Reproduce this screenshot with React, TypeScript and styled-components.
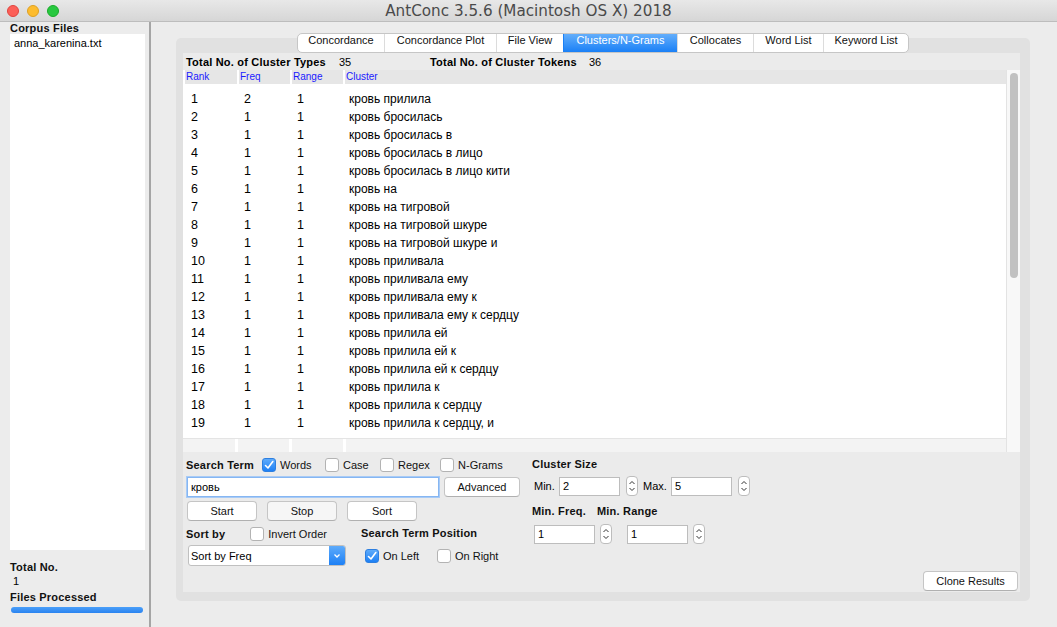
import React from "react";
import styled, { createGlobalStyle, css } from "styled-components";

const GlobalStyle = createGlobalStyle`
  html, body { margin: 0; padding: 0; }
  body {
    background: #ececec;
    font-family: "Liberation Sans", Arial, sans-serif;
    color: #000;
    overflow: hidden;
  }
  * { box-sizing: border-box; }
`;

const Window = styled.div`
  width: 1057px;
  height: 627px;
  display: flex;
  flex-direction: column;
  background: #ececec;
`;

const TitleBar = styled.div`
  height: 22px;
  flex: 0 0 22px;
  display: flex;
  align-items: center;
  position: relative;
  background: linear-gradient(#e8e8e8, #d6d6d6);
  border-bottom: 1px solid #bdbdbd;
`;

const Lights = styled.div`
  display: flex;
  gap: 8px;
  padding-left: 7px;
`;

const Light = styled.span<{ $c: string; $b: string }>`
  width: 12px;
  height: 12px;
  border-radius: 50%;
  background: ${(p) => p.$c};
  border: 1px solid ${(p) => p.$b};
`;

const Title = styled.div`
  position: absolute;
  left: 0;
  right: 0;
  text-align: center;
  font-size: 15.2px;
  color: #4a4a4a;
  font-family: "DejaVu Sans", sans-serif;
  pointer-events: none;
`;

const Body = styled.div`
  flex: 1;
  display: flex;
  min-height: 0;
`;

const Sidebar = styled.div`
  width: 149px;
  flex: 0 0 149px;
  display: flex;
  flex-direction: column;
  padding: 0 4px 0 10px;
`;

const BoldLabel = styled.div`
  font-weight: bold;
  font-size: 11px;
  letter-spacing: 0.2px;
  color: #111;
  white-space: nowrap;
`;

const FileList = styled.div`
  background: #fff;
  height: 516px;
  padding: 3px 4px;
  font-size: 11px;
`;

const SideStats = styled.div`
  display: flex;
  flex-direction: column;
  margin-top: 11px;
`;

const StatValue = styled.div`
  font-size: 11px;
  padding-left: 3px;
  margin: 2px 0 4px;
`;

const Progress = styled.div`
  margin-top: 4px;
  height: 6px;
  width: 132px;
  margin-left: 1px;
  border-radius: 3px;
  background: linear-gradient(#4b9ff9, #2a83f0);
`;

const Divider = styled.div`
  width: 2px;
  flex: 0 0 2px;
  background: #a5a5a5;
`;

const Main = styled.div`
  flex: 1;
  padding: 16px 27px 0 25px;
  display: flex;
  flex-direction: column;
`;

const TabPane = styled.div`
  position: relative;
  height: 563px;
  background: #e1e1e1;
  border-radius: 5px;
  padding: 15px 10px 9px 7px;
  display: flex;
  flex-direction: column;
`;

const Tabs = styled.div`
  position: absolute;
  top: -5px;
  left: 0;
  right: 0;
  display: flex;
  justify-content: center;
`;

const TabGroup = styled.div`
  display: flex;
  height: 20px;
  border: 1px solid #c6c6c6;
  border-radius: 5px;
  overflow: hidden;
  background: #fff;
`;

const Tab = styled.div<{ $active?: boolean; $w: number }>`
  width: ${(p) => p.$w}px;
  font-size: 11px;
  display: flex;
  align-items: flex-start;
  justify-content: center;
  color: #111;
  border-left: 1px solid #dcdcdc;
  &:first-child { border-left: none; }
  ${(p) =>
    p.$active &&
    css`
      background: linear-gradient(#63aefb, #1a80f6);
      color: #fff;
      border-left-color: #1a80f6;
    `}
`;

const Inner = styled.div`
  flex: 1;
  background: #ebebeb;
  display: flex;
  flex-direction: column;
`;

const StatsRow = styled.div`
  height: 17px;
  display: flex;
  align-items: center;
  padding-left: 3px;
  font-size: 11px;
`;

const StatLabel = styled.span<{ $w: number }>`
  font-weight: bold;
  letter-spacing: 0.2px;
  width: ${(p) => p.$w}px;
`;

const StatNum = styled.span<{ $w: number }>`
  width: ${(p) => p.$w}px;
`;

const TableWrap = styled.div`
  display: flex;
  height: 382px;
`;

const Table = styled.div`
  flex: 1;
  display: flex;
  flex-direction: column;
  background: #fff;
`;

const GridRow = styled.div`
  display: grid;
  grid-template-columns: 52px 51px 51px 1fr;
  column-gap: 2px;
  padding-left: 2px;
`;

const HeadRow = styled(GridRow)`
  background: #fff;
  height: 14px;
`;

const HeadCell = styled.div`
  background: #e6e6e6;
  color: #1a1aff;
  font-size: 10px;
  line-height: 14px;
  padding-left: 1px;
`;

const Rows = styled.div`
  flex: 1;
  padding-top: 6px;
`;

const DataRow = styled(GridRow)`
  height: 18px;
  align-items: center;
`;

const DataCell = styled.div<{ $pl: number; $text?: boolean }>`
  padding-left: ${(p) => p.$pl}px;
  white-space: nowrap;
  font-size: ${(p) => (p.$text ? 12 : 12.5)}px;
`;

const FootRow = styled(GridRow)`
  height: 14px;
  column-gap: 3px;
  padding-left: 0;
  border-top: 1px solid #e4e4e4;
`;

const FootCell = styled.div`
  background: #f3f3f3;
`;

const ScrollTrack = styled.div`
  width: 14px;
  flex: 0 0 14px;
  background: #f8f8f8;
  border-left: 1px solid #e3e3e3;
  padding: 3px 2px 0 3px;
`;

const Thumb = styled.div`
  height: 205px;
  border-radius: 4px;
  background: #c1c1c1;
`;

const Controls = styled.div`
  flex: 1;
  display: flex;
  padding: 6px 2px 1px 3px;
`;

const LeftCol = styled.div`
  width: 346px;
  display: flex;
  flex-direction: column;
`;

const Line = styled.div<{ $gap?: number; $mt?: number }>`
  display: flex;
  align-items: center;
  gap: ${(p) => p.$gap ?? 0}px;
  margin-top: ${(p) => p.$mt ?? 0}px;
`;

const CheckWrap = styled.label<{ $ml?: number; $w?: number }>`
  display: flex;
  align-items: center;
  gap: 4px;
  font-size: 11px;
  margin-left: ${(p) => p.$ml ?? 0}px;
  width: ${(p) => (p.$w ? `${p.$w}px` : "auto")};
  color: #111;
  white-space: nowrap;
`;

const Box = styled.span<{ $on?: boolean }>`
  width: 14px;
  height: 14px;
  flex: 0 0 14px;
  border-radius: 3px;
  display: inline-flex;
  align-items: center;
  justify-content: center;
  ${(p) =>
    p.$on
      ? css`
          background: linear-gradient(#5eabfb, #1d80f5);
          border: 1px solid #2d7fe0;
        `
      : css`
          background: #fff;
          border: 1px solid #b3b3b3;
        `}
`;

const TextInput = styled.div<{ $w: number; $focus?: boolean; $ml?: number }>`
  width: ${(p) => p.$w}px;
  height: ${(p) => (p.$focus ? 20 : 19)}px;
  margin-left: ${(p) => p.$ml ?? 0}px;
  background: #fff;
  border: 1px solid ${(p) => (p.$focus ? "#86b6f2" : "#bdbdbd")};
  box-shadow: ${(p) => (p.$focus ? "0 0 0 1px #a8cbf6" : "none")};
  font-size: 11px;
  display: flex;
  align-items: center;
  padding-left: 3px;
`;

const Button = styled.div<{ $w: number; $dim?: boolean; $ml?: number }>`
  width: ${(p) => p.$w}px;
  height: 20px;
  margin-left: ${(p) => p.$ml ?? 0}px;
  background: ${(p) => (p.$dim ? "#f6f6f6" : "#fff")};
  border: 1px solid #c5c5c5;
  border-bottom-color: #b0b0b0;
  border-radius: 4px;
  font-size: 11px;
  display: flex;
  align-items: center;
  justify-content: center;
  color: #111;
`;

const SortGroups = styled.div`
  display: flex;
  margin-top: 6px;
`;

const SortCol = styled.div<{ $w: number }>`
  width: ${(p) => p.$w}px;
  display: flex;
  flex-direction: column;
`;

const Select = styled.div`
  margin-top: 4px;
  margin-left: 2px;
  width: 158px;
  height: 21px;
  display: flex;
  background: #fff;
  border: 1px solid #c0c0c0;
  border-radius: 3px;
  font-size: 11px;
  overflow: hidden;
`;

const SelectText = styled.div`
  flex: 1;
  display: flex;
  align-items: center;
  padding-left: 2px;
`;

const SelectArrow = styled.div`
  width: 16px;
  background: linear-gradient(#5eabfb, #1d80f5);
  display: flex;
  align-items: center;
  justify-content: center;
`;

const RightCol = styled.div`
  width: 230px;
  display: flex;
  flex-direction: column;
`;

const SmallLabel = styled.span<{ $w: number; $ml?: number }>`
  font-size: 11px;
  display: inline-block;
  width: ${(p) => p.$w}px;
  margin-left: ${(p) => p.$ml ?? 0}px;
`;

const StepperBox = styled.div<{ $ml: number }>`
  width: 12px;
  height: 20px;
  margin-left: ${(p) => p.$ml}px;
  border: 1px solid #bdbdbd;
  border-radius: 4px;
  background: #fff;
  display: flex;
  align-items: center;
  justify-content: center;
`;

const Filler = styled.div`
  flex: 1;
  display: flex;
  justify-content: flex-end;
  align-items: flex-end;
`;

const Check = () => (
  <svg width="10" height="10" viewBox="0 0 10 10">
    <path d="M1.5 5.5 L4 8 L8.8 1.5" fill="none" stroke="#fff" strokeWidth="1.6" strokeLinecap="round" strokeLinejoin="round" />
  </svg>
);

const CheckBox = ({ label, on, ml, w }: { label: string; on?: boolean; ml?: number; w?: number }) => (
  <CheckWrap $ml={ml} $w={w}>
    <Box $on={on}>{on && <Check />}</Box>
    {label}
  </CheckWrap>
);

const Stepper = ({ ml }: { ml: number }) => (
  <StepperBox $ml={ml}>
    <svg width="8" height="14" viewBox="0 0 8 14">
      <path d="M1.5 5 L4 2.5 L6.5 5" fill="none" stroke="#333" strokeWidth="1" />
      <path d="M1.5 9 L4 11.5 L6.5 9" fill="none" stroke="#333" strokeWidth="1" />
    </svg>
  </StepperBox>
);

const rows: [number, number, number, string][] = [
  [1, 2, 1, "кровь прилила"],
  [2, 1, 1, "кровь бросилась"],
  [3, 1, 1, "кровь бросилась в"],
  [4, 1, 1, "кровь бросилась в лицо"],
  [5, 1, 1, "кровь бросилась в лицо кити"],
  [6, 1, 1, "кровь на"],
  [7, 1, 1, "кровь на тигровой"],
  [8, 1, 1, "кровь на тигровой шкуре"],
  [9, 1, 1, "кровь на тигровой шкуре и"],
  [10, 1, 1, "кровь приливала"],
  [11, 1, 1, "кровь приливала ему"],
  [12, 1, 1, "кровь приливала ему к"],
  [13, 1, 1, "кровь приливала ему к сердцу"],
  [14, 1, 1, "кровь прилила ей"],
  [15, 1, 1, "кровь прилила ей к"],
  [16, 1, 1, "кровь прилила ей к сердцу"],
  [17, 1, 1, "кровь прилила к"],
  [18, 1, 1, "кровь прилила к сердцу"],
  [19, 1, 1, "кровь прилила к сердцу, и"],
];

const tabs: [string, number][] = [
  ["Concordance", 86],
  ["Concordance Plot", 112],
  ["File View", 67],
  ["Clusters/N-Grams", 114],
  ["Collocates", 76],
  ["Word List", 70],
  ["Keyword List", 85],
];

export default function App() {
  return (
    <>
      <GlobalStyle />
      <Window>
        <TitleBar>
          <Lights>
            <Light $c="#fc5f57" $b="#e0443e" />
            <Light $c="#fdbc2e" $b="#dea123" />
            <Light $c="#28c840" $b="#1aab29" />
          </Lights>
          <Title>AntConc 3.5.6 (Macintosh OS X) 2018</Title>
        </TitleBar>
        <Body>
          <Sidebar>
            <BoldLabel>Corpus Files</BoldLabel>
            <FileList>anna_karenina.txt</FileList>
            <SideStats>
              <BoldLabel>Total No.</BoldLabel>
              <StatValue>1</StatValue>
              <BoldLabel>Files Processed</BoldLabel>
              <Progress />
            </SideStats>
          </Sidebar>
          <Divider />
          <Main>
            <TabPane>
              <Tabs>
                <TabGroup>
                  {tabs.map(([t, w]) => (
                    <Tab key={t} $w={w} $active={t === "Clusters/N-Grams"}>
                      {t}
                    </Tab>
                  ))}
                </TabGroup>
              </Tabs>
              <Inner>
                <StatsRow>
                  <StatLabel $w={153}>Total No. of Cluster Types</StatLabel>
                  <StatNum $w={91}>35</StatNum>
                  <StatLabel $w={159}>Total No. of Cluster Tokens</StatLabel>
                  <StatNum $w={30}>36</StatNum>
                </StatsRow>
                <TableWrap>
                  <Table>
                    <HeadRow>
                      <HeadCell>Rank</HeadCell>
                      <HeadCell>Freq</HeadCell>
                      <HeadCell>Range</HeadCell>
                      <HeadCell>Cluster</HeadCell>
                    </HeadRow>
                    <Rows>
                      {rows.map(([r, f, g, c]) => (
                        <DataRow key={r}>
                          <DataCell $pl={6}>{r}</DataCell>
                          <DataCell $pl={5}>{f}</DataCell>
                          <DataCell $pl={5}>{g}</DataCell>
                          <DataCell $pl={4} $text>{c}</DataCell>
                        </DataRow>
                      ))}
                    </Rows>
                    <FootRow>
                      <FootCell />
                      <FootCell />
                      <FootCell />
                      <FootCell />
                    </FootRow>
                  </Table>
                  <ScrollTrack>
                    <Thumb />
                  </ScrollTrack>
                </TableWrap>
                <Controls>
                  <LeftCol>
                    <Line>
                      <BoldLabel>Search Term</BoldLabel>
                      <CheckBox label="Words" on ml={8} w={63} />
                      <CheckBox label="Case" w={55} />
                      <CheckBox label="Regex" w={60} />
                      <CheckBox label="N-Grams" />
                    </Line>
                    <Line $gap={5} $mt={5}>
                      <TextInput $w={252} $focus $ml={1}>
                        кровь
                      </TextInput>
                      <Button $w={76}>Advanced</Button>
                    </Line>
                    <Line $gap={10} $mt={4}>
                      <Button $w={70} $ml={1}>Start</Button>
                      <Button $w={70} $dim>Stop</Button>
                      <Button $w={70}>Sort</Button>
                    </Line>
                    <SortGroups>
                      <SortCol $w={175}>
                        <Line>
                          <BoldLabel>Sort by</BoldLabel>
                          <CheckBox label="Invert Order" ml={25} />
                        </Line>
                        <Select>
                          <SelectText>Sort by Freq</SelectText>
                          <SelectArrow>
                            <svg width="8" height="6" viewBox="0 0 8 6">
                              <path d="M1.5 1.5 L4 4 L6.5 1.5" fill="none" stroke="#fff" strokeWidth="1.3" />
                            </svg>
                          </SelectArrow>
                        </Select>
                      </SortCol>
                      <SortCol $w={170}>
                        <BoldLabel>Search Term Position</BoldLabel>
                        <Line $mt={10}>
                          <CheckBox label="On Left" on ml={4} w={72} />
                          <CheckBox label="On Right" />
                        </Line>
                      </SortCol>
                    </SortGroups>
                  </LeftCol>
                  <RightCol>
                    <BoldLabel>Cluster Size</BoldLabel>
                    <Line $mt={6}>
                      <SmallLabel $w={25} $ml={2}>Min.</SmallLabel>
                      <TextInput $w={61}>2</TextInput>
                      <Stepper ml={6} />
                      <SmallLabel $w={28} $ml={5}>Max.</SmallLabel>
                      <TextInput $w={61}>5</TextInput>
                      <Stepper ml={6} />
                    </Line>
                    <Line $mt={9}>
                      <BoldLabel style={{ width: 65 }}>Min. Freq.</BoldLabel>
                      <BoldLabel>Min. Range</BoldLabel>
                    </Line>
                    <Line $mt={7}>
                      <TextInput $w={61} $ml={2}>1</TextInput>
                      <Stepper ml={5} />
                      <TextInput $w={61} $ml={15}>1</TextInput>
                      <Stepper ml={5} />
                    </Line>
                  </RightCol>
                  <Filler>
                    <Button $w={95}>Clone Results</Button>
                  </Filler>
                </Controls>
              </Inner>
            </TabPane>
          </Main>
        </Body>
      </Window>
    </>
  );
}
